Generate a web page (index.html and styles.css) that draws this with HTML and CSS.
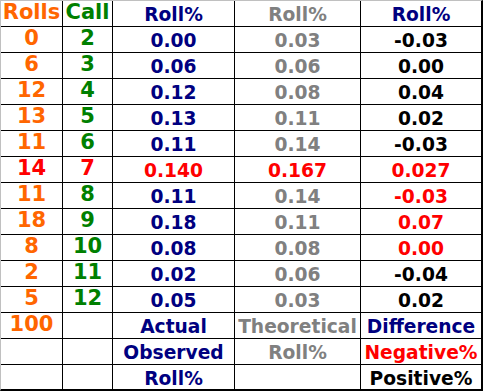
FILE: index.html
```html
<!DOCTYPE html>
<html>
<head>
<meta charset="utf-8">
<link rel="stylesheet" href="styles.css">
</head>
<body>
<div class="sheet">
  <div class="c big orange">Rolls</div><div class="c big green">Call</div><div class="c navy">Roll%</div><div class="c gray">Roll%</div><div class="c navy">Roll%</div>
  <div class="c big orange">0</div><div class="c big green">2</div><div class="c navy">0.00</div><div class="c gray">0.03</div><div class="c black">-0.03</div>
  <div class="c big orange">6</div><div class="c big green">3</div><div class="c navy">0.06</div><div class="c gray">0.06</div><div class="c black">0.00</div>
  <div class="c big orange">12</div><div class="c big green">4</div><div class="c navy">0.12</div><div class="c gray">0.08</div><div class="c black">0.04</div>
  <div class="c big orange">13</div><div class="c big green">5</div><div class="c navy">0.13</div><div class="c gray">0.11</div><div class="c black">0.02</div>
  <div class="c big orange">11</div><div class="c big green">6</div><div class="c navy">0.11</div><div class="c gray">0.14</div><div class="c black">-0.03</div>
  <div class="c big red">14</div><div class="c big red">7</div><div class="c red">0.140</div><div class="c red">0.167</div><div class="c red">0.027</div>
  <div class="c big orange">11</div><div class="c big green">8</div><div class="c navy">0.11</div><div class="c gray">0.14</div><div class="c red">-0.03</div>
  <div class="c big orange">18</div><div class="c big green">9</div><div class="c navy">0.18</div><div class="c gray">0.11</div><div class="c red">0.07</div>
  <div class="c big orange">8</div><div class="c big green">10</div><div class="c navy">0.08</div><div class="c gray">0.08</div><div class="c red">0.00</div>
  <div class="c big orange">2</div><div class="c big green">11</div><div class="c navy">0.02</div><div class="c gray">0.06</div><div class="c black">-0.04</div>
  <div class="c big orange">5</div><div class="c big green">12</div><div class="c navy">0.05</div><div class="c gray">0.03</div><div class="c black">0.02</div>
  <div class="c big orange">100</div><div class="c big green"></div><div class="c navy">Actual</div><div class="c gray">Theoretical</div><div class="c navy">Difference</div>
  <div class="c big"></div><div class="c big"></div><div class="c navy">Observed</div><div class="c gray">Roll%</div><div class="c red">Negative%</div>
  <div class="c big"></div><div class="c big"></div><div class="c navy">Roll%</div><div class="c gray"></div><div class="c black">Positive%</div>
</div>
</body>
</html>
```

FILE: styles.css
```css
html, body {
  margin: 0;
  padding: 0;
  background: #ffffff;
}

.sheet {
  display: grid;
  grid-template-columns: 61px 49px 121px 125px 120px;
  grid-template-rows: repeat(14, 25px) 24px;
  gap: 1px;
  width: 480px;
  background: #000000;
  border-left: 1px solid #c0c0c0;
  border-top: 1px solid #c0c0c0;
  border-right: 2px solid #000000;
  border-bottom: 2px solid #000000;
  font-family: "DejaVu Sans", Verdana, sans-serif;
  font-weight: bold;
}

.c {
  background: #ffffff;
  text-align: center;
  white-space: nowrap;
  overflow: visible;
  font-size: 18.67px;
  line-height: 23px;
  padding-top: 2px;
}

.c.big {
  font-size: 21px;
  line-height: 23px;
  padding-top: 0;
}

.orange { color: #ff6600; }
.green { color: #008000; }
.navy { color: #000080; }
.gray { color: #808080; }
.black { color: #000000; }
.red { color: #ff0000; }
```
